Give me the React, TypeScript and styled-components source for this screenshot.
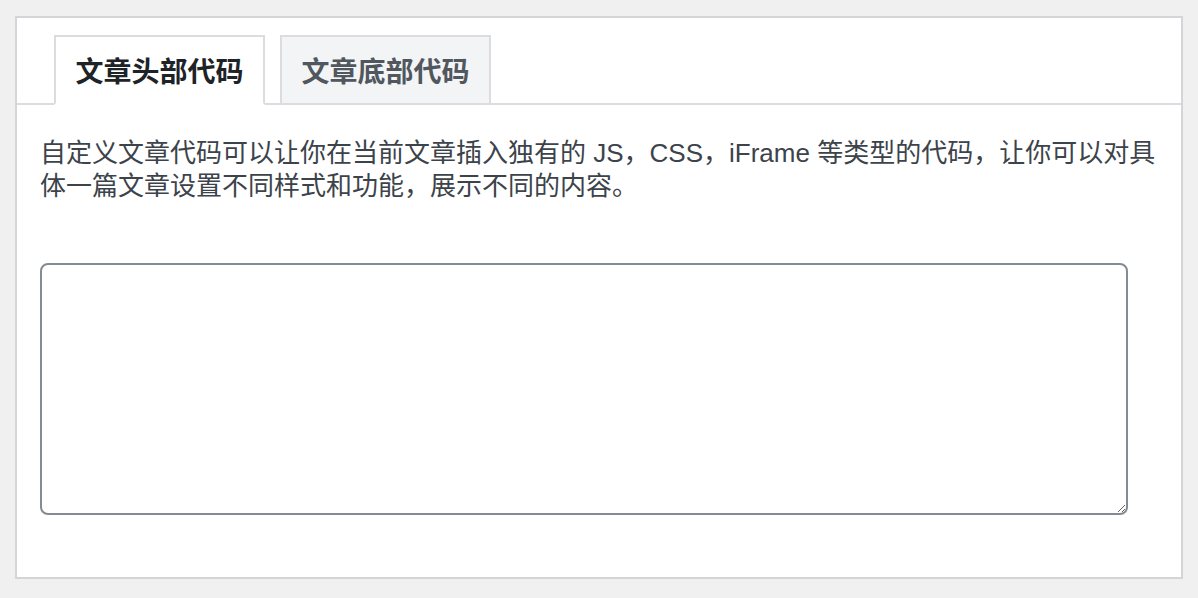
import styled, { createGlobalStyle } from 'styled-components';
import { useState } from 'react';

const GlobalStyle = createGlobalStyle`
  html, body {
    margin: 0;
    padding: 0;
    background: #f0f0f1;
  }
  body {
    font-family: "Liberation Sans", "Noto Sans CJK SC", sans-serif;
  }
`;

const Page = styled.div`
  padding: 16px 15px 18px 15px;
`;

const Panel = styled.section`
  background: #fff;
  border: 2px solid #d3d5d8;
  height: 563px;
  box-sizing: border-box;
`;

const TabBar = styled.ul`
  display: flex;
  gap: 15px;
  margin: 0;
  padding: 17px 0 0 37px;
  list-style: none;
  border-bottom: 2px solid #dcdcde;
`;

const Tab = styled.li<{ $active?: boolean }>`
  width: 211px;
  height: 70px;
  box-sizing: border-box;
  display: flex;
  align-items: center;
  justify-content: center;
  margin-bottom: -2px;
  border: 2px solid #dcdcde;
  border-bottom-color: ${p => (p.$active ? '#fff' : '#dcdcde')};
  background: ${p => (p.$active ? '#fff' : '#f3f4f5')};
  color: ${p => (p.$active ? '#1d2327' : '#50575e')};
  font-size: 28px;
  font-weight: 700;
  cursor: pointer;
`;

const Body = styled.div`
  padding: 32px 23px 0 23px;
`;

const Intro = styled.p`
  margin: 0;
  width: 1130px;
  font-size: 26px;
  line-height: 33px;
  color: #3c434a;
`;

const CodeBox = styled.textarea`
  display: block;
  margin-top: 60px;
  width: 1088px;
  height: 252px;
  box-sizing: border-box;
  border: 2px solid #848b92;
  border-radius: 8px;
  background: #fff;
  padding: 8px 12px;
  font-family: "Liberation Mono", monospace;
  font-size: 18px;
  color: #2c3338;
  outline: none;
`;

const tabs = ['文章头部代码', '文章底部代码'];

export default function App() {
  const [active, setActive] = useState(0);

  return (
    <Page>
      <GlobalStyle />
      <Panel>
        <TabBar>
          {tabs.map((t, i) => (
            <Tab key={t} $active={i === active} onClick={() => setActive(i)}>
              {t}
            </Tab>
          ))}
        </TabBar>
        <Body>
          <Intro>
            自定义文章代码可以让你在当前文章插入独有的 JS，CSS，iFrame 等类型的代码，让你可以对具体一篇文章设置不同样式和功能，展示不同的内容。
          </Intro>
          <CodeBox />
        </Body>
      </Panel>
    </Page>
  );
}
